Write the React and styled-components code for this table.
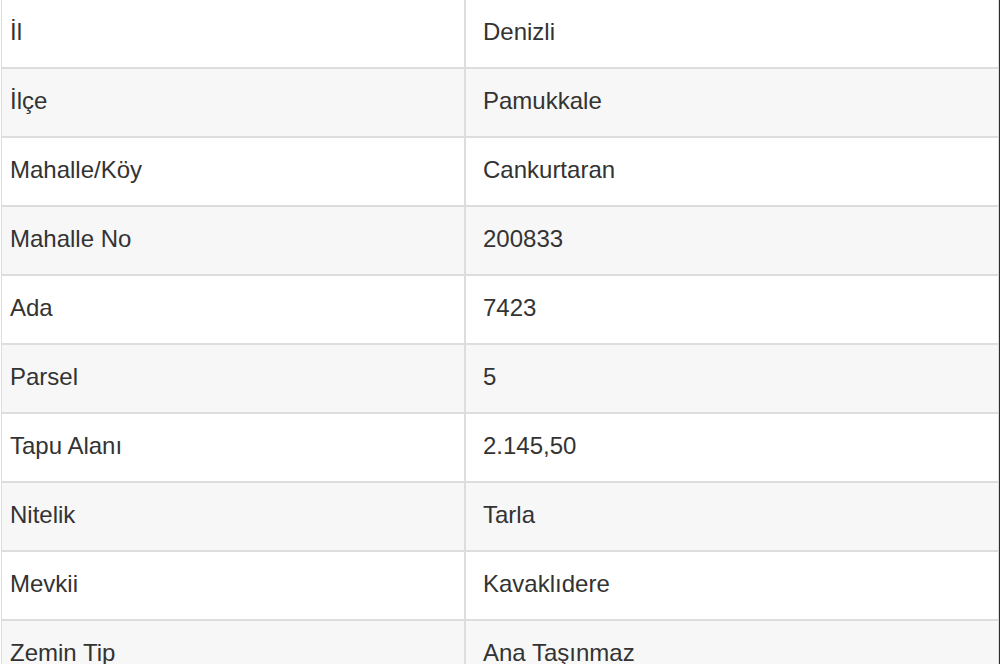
import React from "react";
import styled, { createGlobalStyle } from "styled-components";

const GlobalStyle = createGlobalStyle`
  body {
    margin: 0;
    background: #ffffff;
    font-family: "Liberation Sans", Arial, Helvetica, sans-serif;
    color: #333333;
  }
`;

const rows = [
  ["İl", "Denizli"],
  ["İlçe", "Pamukkale"],
  ["Mahalle/Köy", "Cankurtaran"],
  ["Mahalle No", "200833"],
  ["Ada", "7423"],
  ["Parsel", "5"],
  ["Tapu Alanı", "2.145,50"],
  ["Nitelik", "Tarla"],
  ["Mevkii", "Kavaklıdere"],
  ["Zemin Tip", "Ana Taşınmaz"],
];

function App() {
  return (
    <>
      <GlobalStyle />
      <Frame>
        <Table>
          {rows.map(([label, value], i) => (
            <Row key={label} $striped={i % 2 === 1}>
              <LabelCell>{label}</LabelCell>
              <ValueCell>{value}</ValueCell>
            </Row>
          ))}
        </Table>
      </Frame>
    </>
  );
}

const Frame = styled.div`
  width: 999px;
  height: 664px;
  overflow: hidden;
  border-right: 1px solid #2e2e2e;
`;

const Table = styled.div`
  width: 996px;
  margin-left: 1px;
  border-left: 1px solid #dddddd;
  border-right: 1px solid #dddddd;
`;

const Row = styled.div`
  display: grid;
  grid-template-columns: 464px 1fr;
  height: 67px;
  border-bottom: 2px solid #dddddd;
  background: ${(p) => (p.$striped ? "#f7f7f7" : "#ffffff")};
`;

const LabelCell = styled.div`
  display: flex;
  align-items: center;
  padding: 0 8px 3px;
  font-size: 24px;
  border-right: 2px solid #dddddd;
`;

const ValueCell = styled.div`
  display: flex;
  align-items: center;
  padding: 0 16px 3px 17px;
  font-size: 24px;
`;

export default App;
